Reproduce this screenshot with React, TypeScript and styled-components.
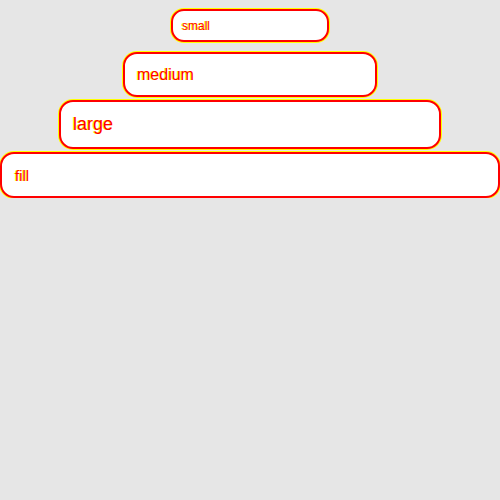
import React from "react";
import styled, { createGlobalStyle } from "styled-components";

const Global = createGlobalStyle`
  html, body { margin: 0; padding: 0; background: #e6e6e6; overflow: hidden; }
  body { font-family: "Liberation Sans", Arial, sans-serif; }
`;

const Stack = styled.div`
  display: flex;
  flex-direction: column;
  align-items: center;
  padding-top: 9px;
  gap: 3px;
`;

type Size = "small" | "medium" | "large" | "fill";

const dims: Record<Size, { w: string; h: number; fs: number; pl: number; r: number; mt: number }> = {
  small: { w: "158px", h: 33, fs: 12, pl: 9, r: 13, mt: 0 },
  medium: { w: "254px", h: 45, fs: 16, pl: 12, r: 14, mt: 7 },
  large: { w: "382px", h: 49, fs: 18, pl: 12, r: 14, mt: 0 },
  fill: { w: "100%", h: 46, fs: 15, pl: 13, r: 14, mt: 0 },
};

const Field = styled.div<{ $size: Size }>`
  box-sizing: border-box;
  width: ${(p) => dims[p.$size].w};
  height: ${(p) => dims[p.$size].h}px;
  margin-top: ${(p) => dims[p.$size].mt}px;
  background: #ffffff;
  border: 2px solid #ff0000;
  border-radius: ${(p) => dims[p.$size].r}px;
  box-shadow: 0 0 0 1px #ffff00;
  display: flex;
  align-items: center;
  padding-left: ${(p) => dims[p.$size].pl}px;
  font-size: ${(p) => dims[p.$size].fs}px;
  color: #ff0000;
  text-shadow: -1px 0 #ffff00;
`;

export default function App() {
  return (
    <>
      <Global />
      <Stack>
        <Field $size="small">small</Field>
        <Field $size="medium">medium</Field>
        <Field $size="large">large</Field>
        <Field $size="fill">fill</Field>
      </Stack>
    </>
  );
}
